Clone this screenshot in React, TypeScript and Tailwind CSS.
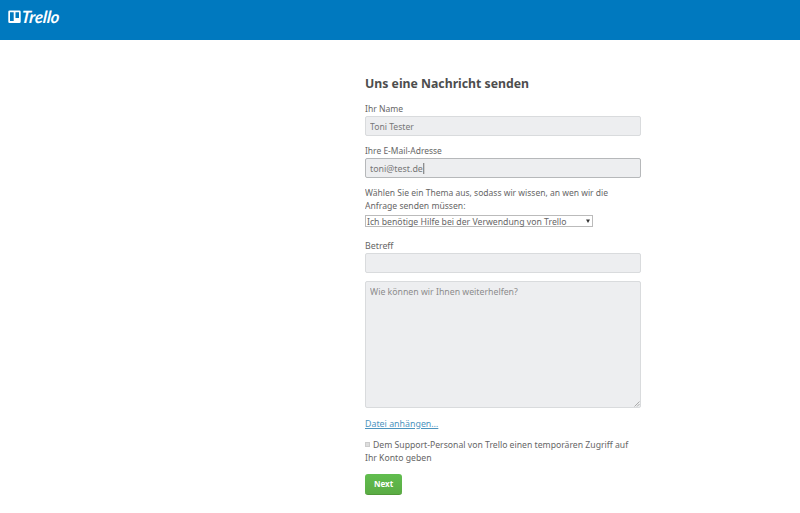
import React from "react";

function Line({ fit = "scale-x-[0.91]", children }: { fit?: string; children?: React.ReactNode }) {
  return <span className={`block w-max origin-left whitespace-nowrap leading-[13px] ${fit}`}>{children}</span>;
}

function Field({ value, active = false }: { value?: string; active?: boolean }) {
  return (
    <div
      className={`flex h-5 w-[276px] items-center rounded-[2px] border bg-[#edeef0] px-[4px] ${
        active ? "border-[#b6b8ba]" : "border-[#d9dbdd]"
      }`}
    >
      <span className="text-[#777]">
        <Line fit={active ? "scale-x-[0.935]" : "scale-x-[0.905]"}>
          {value}
          {active && <span className="inline-block h-[11px] w-px bg-[#666] align-[-2px]" />}
        </Line>
      </span>
    </div>
  );
}

function Logo() {
  return (
    <svg width="60" height="24" viewBox="0 0 60 24" className="block" aria-label="Trello">
      <path
        fill="#fff"
        fillRule="evenodd"
        d="M1.600 3.500h9.800q1.300 0 1.300 1.300v10q0 1.300-1.300 1.300H1.600Q.3 16.100.3 14.800v-10Q.3 3.500 1.600 3.500ZM2 5.300v8.800h3.700V5.300ZM7.500 5.300v5.700H11V5.300Z"
      />
      <text
        transform="translate(13 15.500) skewX(-6)"
        fill="#fff"
        fontSize="17"
        fontWeight="700"
        fontStyle="italic"
        fontFamily="Lato, sans-serif"
        textLength="38"
        lengthAdjust="spacingAndGlyphs"
      >
        Trello
      </text>
    </svg>
  );
}

export default function App() {
  return (
    <div className="h-[513px] w-[800px] overflow-hidden bg-white font-['Noto_Sans','Open_Sans',sans-serif] text-[9.5px] text-[#666]">
      <header className="h-10 bg-[#0079bf] pt-[7px] pl-[8px]">
        <Logo />
      </header>
      <main className="ml-[365px] w-[276px] pt-[34px]">
        <h1 className="h-[28px] w-max origin-left scale-x-[0.943] whitespace-nowrap text-[13px] leading-[18px] font-bold text-[#4d4d4d]">
          Uns eine Nachricht senden
        </h1>
        <div className="h-[14px]">
          <Line fit="scale-x-[0.9]">Ihr Name</Line>
        </div>
        <Field value="Toni Tester" />
        <div className="mt-[8px] h-[14px]">
          <Line fit="scale-x-[0.89]">Ihre E-Mail-Adresse</Line>
        </div>
        <Field value="toni@test.de" active />
        <div className="mt-[8px] h-[29px]">
          <Line fit="scale-x-[0.897]">Wählen Sie ein Thema aus, sodass wir wissen, an wen wir die</Line>
          <Line fit="scale-x-[0.906]">Anfrage senden müssen:</Line>
        </div>
        <div className="flex h-[12px] w-[228px] items-center justify-between border border-[#bbb] bg-white pr-[2px] pl-px">
          <Line fit="scale-x-[0.915]">Ich benötige Hilfe bei der Verwendung von Trello</Line>
          <svg width="4" height="4" viewBox="0 0 4 4" className="mb-px shrink-0">
            <path d="M0 .5h4L2 4Z" fill="#333" />
          </svg>
        </div>
        <div className="mt-[12px] h-[14px]">
          <Line fit="scale-x-[0.93]">Betreff</Line>
        </div>
        <Field />
        <div className="relative mt-[8px] h-[127px] w-[276px] rounded-[2px] border border-[#d9dbdd] bg-[#edeef0] px-[4px] pt-[3px] text-[#8c8c8c]">
          <Line fit="scale-x-[0.92]">Wie können wir Ihnen weiterhelfen?</Line>
          <svg className="absolute right-0 bottom-0" width="6" height="6" viewBox="0 0 6 6">
            <path d="M.5 5.500 5.500.5M3 5.500 5.500 3" stroke="#999" strokeWidth=".8" />
          </svg>
        </div>
        <div className="mt-[9px] text-[#4d94be] underline">
          <Line fit="scale-x-[0.93]">Datei anhängen…</Line>
        </div>
        <div className="mt-[8px]">
          <div className="flex items-center">
            <span className="mr-[3px] size-[5px] shrink-0 border border-[#ccc] bg-[#ddd]" />
            <Line fit="scale-x-[0.911]">Dem Support-Personal von Trello einen temporären Zugriff auf</Line>
          </div>
          <Line fit="scale-x-[0.912]">Ihr Konto geben</Line>
        </div>
        <div className="mt-[10px] flex h-[21px] w-[37px] items-center justify-center rounded-[3px] border-b border-[#519839] bg-linear-to-b from-[#61bd4f] to-[#5aac44] text-[8px] font-bold text-white">
          Next
        </div>
      </main>
    </div>
  );
}
